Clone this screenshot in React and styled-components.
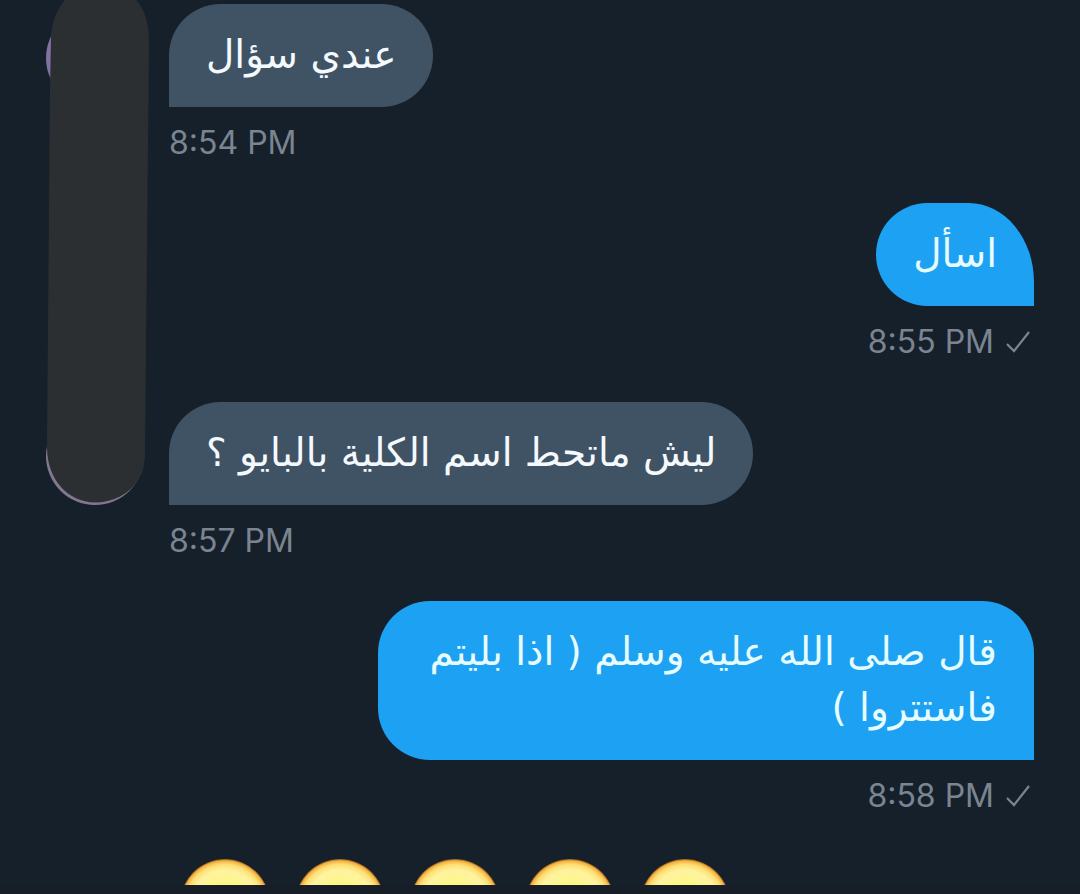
import React from "react";
import styled, { createGlobalStyle } from "styled-components";

const GlobalStyle = createGlobalStyle`
  * { box-sizing: border-box; }
  body { margin: 0; background: #16202a; }
`;

const Screen = styled.main`
  position: relative;
  display: flex;
  flex-direction: column;
  min-height: 100vh;
  overflow: hidden;
  background: #16202a;
`;

const Thread = styled.ol`
  display: flex;
  flex-direction: column;
  gap: 40px;
  margin: 0;
  padding: 4px 46px 0;
  list-style: none;
`;

const Message = styled.li`
  display: flex;
  flex-direction: column;
  align-items: ${(p) => (p.$sent ? "flex-end" : "flex-start")};
`;

const Row = styled.div`
  display: flex;
  align-items: flex-end;
  gap: 25px;
`;

const Avatar = styled.span`
  flex: none;
  width: 98px;
  height: 98px;
  border-radius: 50%;
  background: ${(p) => p.$color};
`;

const Bubble = styled.p`
  max-width: 656px;
  margin: 0;
  padding: 23px 37px 24px;
  border-radius: ${(p) => (p.$sent ? "52px 52px 0 52px" : "52px 52px 52px 0")};
  ${(p) => p.$short && "border-radius: 52px 66px 0 52px / 52px 80px 0 52px;"}
  background: ${(p) => (p.$sent ? "#1da1f2" : "#3f5364")};
  color: ${(p) => (p.$sent ? "#e6fcff" : "#f4f9fd")};
  font: 39px/56px "DejaVu Sans", sans-serif;
`;

const Meta = styled.div`
  display: flex;
  align-items: center;
  gap: 12px;
  margin-top: 16px;
  padding: ${(p) => (p.$sent ? "0 4px 0 0" : "0 0 0 123px")};
  color: #7a8591;
  font: 32px/40px Inter, sans-serif;
`;

const EmojiRow = styled.div`
  display: flex;
  gap: 25px;
  height: 26px;
  margin-top: 43px;
  padding-left: 180px;
  overflow: hidden;
`;

const Emoji = styled.span`
  flex: none;
  width: 90px;
  height: 90px;
  border-radius: 50%;
  background: radial-gradient(circle closest-side, #fbf56a 0, #fdf68a 50%, #fff3a0 75%, #fddf72 88%, #f3b144 96%, #8a5510 100%);
`;

const BottomEdge = styled.div`
  height: 9px;
  background: #181e28;
`;

const Marker = styled.svg`
  position: absolute;
  top: 0;
  left: 0;
  pointer-events: none;
`;

const Check = () => (
  <svg width="24" height="24" viewBox="0 0 24 24" fill="none" stroke="currentColor" strokeWidth="2.2" aria-label="Sent">
    <path d="M1 14 L8 21 L23 2" />
  </svg>
);

const messages = [
  { text: "عندي سؤال", time: "8:54 PM", avatar: "#8172a3" },
  { text: "اسأل", time: "8:55 PM", sent: true, short: true },
  { text: "ليش ماتحط اسم الكلية بالبايو ؟", time: "8:57 PM", avatar: "#81788f" },
  { text: "قال صلى الله عليه وسلم ( اذا بليتم فاستتروا )", time: "8:58 PM", sent: true },
];

export default function App() {
  return (
    <Screen>
      <GlobalStyle />
      <Thread>
        {messages.map((m) => (
          <Message key={m.time} $sent={m.sent}>
            <Row>
              {m.avatar && <Avatar $color={m.avatar} />}
              <Bubble dir="rtl" lang="ar" $sent={m.sent} $short={m.short}>{m.text}</Bubble>
            </Row>
            <Meta $sent={m.sent}>
              <time>{m.time}</time>
              {m.sent && <Check />}
            </Meta>
          </Message>
        ))}
      </Thread>
      <EmojiRow>
        {[0, 1, 2, 3, 4].map((i) => <Emoji key={i} />)}
      </EmojiRow>
      <BottomEdge />
      <Marker width="160" height="520" viewBox="0 0 160 520" aria-hidden="true">
        <path
          d="M50 90 L51 38 C52 18 60 3 70 -5 H131 C143 5 149 20 149 42 L145 450 C145 464 143 472 139 479 C129 495 112 502.500 95 502.500 C68 502 47.500 480 47 448 Z"
          fill="#2c2f31"
        />
      </Marker>
    </Screen>
  );
}
